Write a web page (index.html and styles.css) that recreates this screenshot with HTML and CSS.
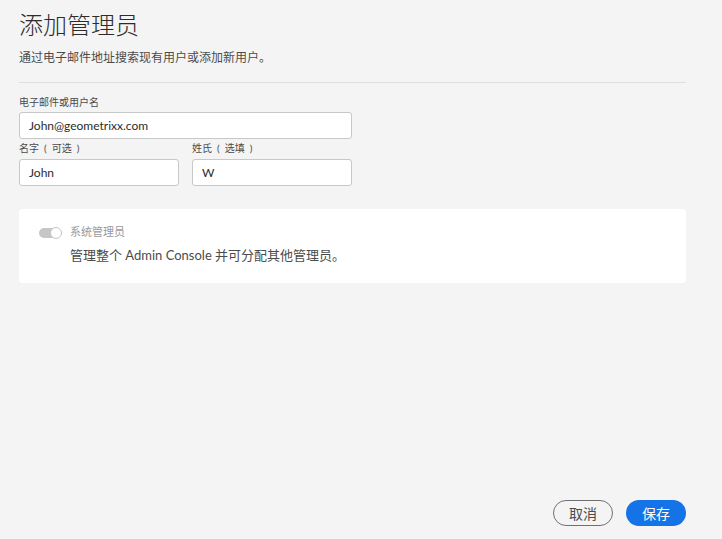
FILE: index.html
```html
<!DOCTYPE html>
<html lang="zh-CN">
<head>
<meta charset="utf-8">
<title>添加管理员</title>
<link rel="stylesheet" href="styles.css">
</head>
<body>
<div class="page">
  <h1 class="title">添加管理员</h1>
  <p class="subtitle">通过电子邮件地址搜索现有用户或添加新用户。</p>
  <hr class="divider">
  <div class="field">
    <label class="label">电子邮件或用户名</label>
    <div class="input wide">John@geometrixx.com</div>
  </div>
  <div class="row">
    <div class="field">
      <label class="label paren">名字 ( 可选 )</label>
      <div class="input half">John</div>
    </div>
    <div class="field">
      <label class="label paren">姓氏 ( 选填 )</label>
      <div class="input half">W</div>
    </div>
  </div>
  <div class="card">
    <div class="card-head">
      <span class="toggle"><span class="knob"></span></span>
      <span class="role">系统管理员</span>
    </div>
    <p class="desc">管理整个 Admin Console 并可分配其他管理员。</p>
  </div>
  <div class="spacer"></div>
  <div class="actions">
    <button class="btn secondary">取消</button>
    <button class="btn primary">保存</button>
  </div>
</div>
</body>
</html>
```

FILE: styles.css
```css
html, body {
  margin: 0;
  padding: 0;
  background: #f4f4f4;
  height: 100%;
}
body {
  font-family: Lato, "Noto Sans CJK SC", sans-serif;
  color: #4b4b4b;
}
.page {
  box-sizing: border-box;
  width: 686px;
  height: 539px;
  padding: 0 0 13px 19px;
  display: flex;
  flex-direction: column;
}
.title {
  margin: 8px 0 0;
  font-size: 24px;
  font-weight: 300;
  line-height: 34px;
  color: #2c2c2c;
}
.subtitle {
  margin: 8px 0 0;
  font-size: 12px;
  line-height: 16px;
  color: #4b4b4b;
}
.divider {
  margin: 16px 0 0;
  border: 0;
  border-top: 1px solid #dedede;
  width: 667px;
}
.field {
  display: flex;
  flex-direction: column;
}
.label {
  font-size: 10px;
  line-height: 14px;
  margin-top: 12px;
  margin-bottom: 3px;
  color: #4b4b4b;
}
.label.paren {
  word-spacing: 2.5px;
  white-space: pre;
}
.row .label {
  margin-top: 2px;
  margin-bottom: 4px;
}
.row {
  display: flex;
  gap: 13px;
}
.input {
  box-sizing: border-box;
  height: 27px;
  background: #fff;
  border: 1px solid #c8c8c8;
  border-radius: 3px;
  padding: 0 9px;
  font-size: 12px;
  line-height: 25px;
  color: #2c2c2c;
}
.input.wide { width: 333px; }
.input.half { width: 160px; }
.card {
  margin-top: 23px;
  width: 667px;
  box-sizing: border-box;
  background: #fff;
  border-radius: 4px;
  padding: 15px 20px 19px;
}
.card-head {
  display: flex;
  align-items: center;
  gap: 9px;
}
.toggle {
  position: relative;
  width: 22px;
  height: 10px;
  border-radius: 5px;
  background: #c6c6c6;
  margin-top: 1px;
}
.knob {
  position: absolute;
  right: -1px;
  top: -1px;
  width: 10px;
  height: 10px;
  border-radius: 50%;
  background: #fff;
  border: 1px solid #c6c6c6;
}
.role {
  font-size: 11px;
  line-height: 16px;
  color: #9a9a9a;
}
.desc {
  margin: 6px 0 0 31px;
  font-size: 13px;
  line-height: 18px;
  color: #4b4b4b;
}
.spacer { flex: 1; }
.actions {
  display: flex;
  justify-content: flex-end;
  gap: 13px;
}
.btn {
  box-sizing: border-box;
  width: 60px;
  height: 26px;
  border-radius: 13px;
  font-family: "Noto Sans CJK SC", sans-serif;
  font-size: 14px;
  font-weight: 400;
  padding: 0;
  cursor: pointer;
}
.btn.secondary {
  background: transparent;
  border: 1.5px solid #707070;
  color: #4b4b4b;
}
.btn.primary {
  background: #1473e6;
  border: 0;
  color: #fff;
}
```
